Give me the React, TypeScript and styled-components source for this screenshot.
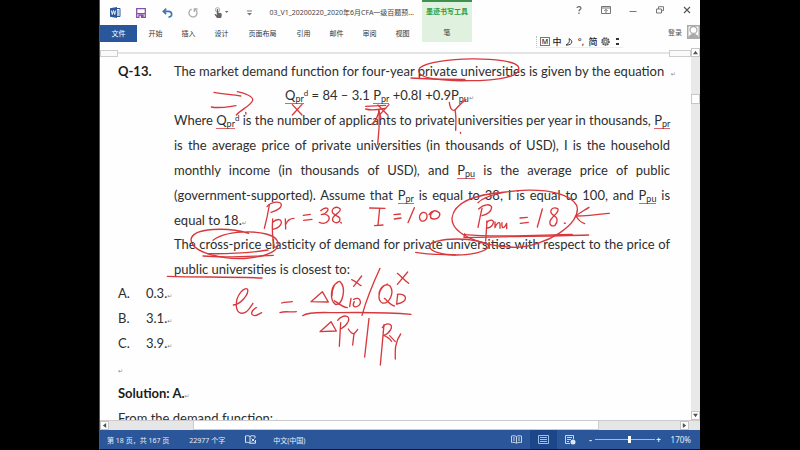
import React from 'react';
import styled, { createGlobalStyle } from 'styled-components';

const GlobalStyle = createGlobalStyle`
  * { box-sizing: border-box; }
  body { margin: 0; background: #000; }
  button { border: 0; padding: 0; margin: 0; background: none; font: inherit; color: inherit; }
`;

const ui = `"Noto Sans", "Noto Sans CJK SC", sans-serif`;

const Screen = styled.div`
  display: grid;
  grid-template-columns: 99px minmax(0, 1fr) 100px;
  height: 100vh;
  background: #000;
`;

const AppWindow = styled.div`
  grid-column: 2;
  position: relative;
  display: flex;
  flex-direction: column;
  min-width: 0;
  min-height: 0;
  overflow: hidden;
  background: #fefefe;
  border-left: 1px solid #555;
  border-bottom: 1px solid #0b1c38;
  font-family: ${ui};
  color: #555;
`;

const Header = styled.header`
  display: flex;
  flex: 0 0 48px;
`;

const HeaderMain = styled.div`
  flex: 0 0 322px;
  min-width: 0;
`;

const QuickBar = styled.div`
  display: flex;
  align-items: center;
  height: 25px;
  padding-left: 2px;
`;

const QuickButton = styled.button<{ $wide?: boolean }>`
  display: flex;
  align-items: center;
  justify-content: center;
  width: ${(p) => (p.$wide ? 30 : 26)}px;
  height: 20px;
  svg { display: block; }
`;

const FileTitle = styled.div`
  flex: 1;
  padding-right: 8px;
  font-size: 7px;
  line-height: 12px;
  white-space: nowrap;
  text-align: right;
  color: #444;
`;

const Tabs = styled.nav`
  display: flex;
  height: 17px;
  font-size: 7px;
  line-height: 17px;
`;

const FileTab = styled.button`
  width: 37px;
  margin-right: 2px;
  background: #2a569b;
  color: #fff;
`;

const Tab = styled.button<{ $wide?: boolean }>`
  width: ${(p) => (p.$wide ? 49 : 33)}px;
  color: #333;
  white-space: nowrap;
`;

const ContextTab = styled.div`
  flex: 0 0 50px;
  height: 42px;
  border-top: 2px solid #3f9150;
  background: #e0f2df;
  text-align: center;
  white-space: nowrap;
  font-size: 7px;
`;

const ContextTitle = styled.div`
  height: 23px;
  line-height: 20px;
  font-weight: 700;
  color: #2f9e3c;
`;

const ContextButton = styled.button`
  line-height: 16px;
  color: #333;
`;

const HeaderSide = styled.div`
  flex: 1;
  min-width: 0;
`;

const Controls = styled.div`
  display: flex;
  justify-content: flex-end;
  height: 22px;
`;

const Control = styled.button`
  display: flex;
  align-items: center;
  justify-content: center;
  width: 27px;
  height: 20px;
`;

const SideRow = styled.div`
  display: flex;
  justify-content: space-between;
  height: 26px;
  padding-left: 64px;
`;

const InputMethod = styled.div`
  display: flex;
  align-self: flex-end;
  align-items: center;
  height: 12px;
  padding-left: 3px;
  border-left: 1px dotted #bbb;
  border-bottom: 1px solid #eee;
  font-size: 9px;
  line-height: 11px;
  font-weight: 500;
  color: #222;
`;

const Mode = styled.button<{ $boxed?: boolean }>`
  display: flex;
  align-items: center;
  justify-content: center;
  width: ${(p) => (p.$boxed ? 10 : 12)}px;
  height: ${(p) => (p.$boxed ? 9 : 11)}px;
  margin-right: ${(p) => (p.$boxed ? 1 : 0)}px;
  border: ${(p) => (p.$boxed ? '1px solid #777' : '0')};
  font-size: ${(p) => (p.$boxed ? 7 : 9)}px;
`;

const Account = styled.button`
  display: flex;
  align-items: center;
  gap: 5px;
  height: 18px;
  padding-top: 2px;
  font-size: 7px;
  color: #555;
  white-space: nowrap;
`;

const Body = styled.div`
  display: flex;
  flex: 1;
  min-height: 0;
`;

const PageColumn = styled.div`
  display: flex;
  flex-direction: column;
  flex: 1;
  min-width: 0;
`;

const Ruler = styled.div`
  display: flex;
  align-items: center;
  justify-content: space-between;
  flex: 0 0 10px;
  background: linear-gradient(#fefefe 4px, #e4e4e4 4px, #e4e4e4 6px, #fefefe 6px);
`;

const RulerBox = styled.div<{ $right?: boolean }>`
  width: ${(p) => (p.$right ? 22 : 18)}px;
  height: 7px;
  border: 1px solid #ccc;
  background: #fafafa;
`;

const Page = styled.main`
  flex: 1;
  min-height: 0;
  overflow: hidden;
  padding: 1px 21px 0 18px;
  font-family: Lato, "Noto Sans", sans-serif;
  font-size: 13px;
  line-height: 25px;
  color: #2e2e2e;
`;

const Question = styled.section`
  display: grid;
  grid-template-columns: 56px minmax(0, 1fr);
`;

const Label = styled.strong`
  color: #1c1c1c;
`;

const Line = styled.span<{ $loose?: boolean }>`
  display: block;
  height: ${(p) => (p.$loose ? 24 : 25)}px;
  white-space: nowrap;
  text-align: left;
  text-align-last: ${(p) => (p.$loose ? 'left' : 'justify')};
`;

const Formula = styled.div`
  height: 25px;
  padding-left: 111px;
  white-space: nowrap;
`;

const Small = styled.sub`
  font-size: 9px;
  line-height: 0;
  vertical-align: -2px;
`;

const Raised = styled.sup`
  font-size: 8px;
  line-height: 0;
  vertical-align: 4px;
`;

const Flagged = styled.span`
  box-shadow: 0 1px 0 #d9656b;
`;

const Mark = styled.span`
  font-family: "DejaVu Sans", sans-serif;
  font-size: 6px;
  line-height: 0;
  color: #888;
`;

const Answers = styled.ol`
  margin: 0;
  padding: 0;
  list-style: none;
`;

const Answer = styled.li`
  display: grid;
  grid-template-columns: 28px 1fr;
`;

const Paragraph = styled.div`
  height: 25px;
  white-space: nowrap;
`;

const VScroll = styled.div`
  display: flex;
  flex-direction: column;
  flex: 0 0 9px;
  background: #e9e9e9;
`;

const ScrollButton = styled.button`
  display: flex;
  align-items: center;
  justify-content: center;
  flex: 0 0 9px;
  height: 9px;
  border: 1px solid #c6c6c6;
  background: #fff;
`;

const VThumb = styled.div`
  height: 10px;
  margin: 37px 0 auto;
  border: 1px solid #c6c6c6;
  background: #fff;
`;

const HScroll = styled.div`
  display: flex;
  flex: 0 0 10px;
  padding-right: 11px;
  background: #e6e6e6;
  border-top: 1px solid #ccc;
`;

const HThumb = styled.div`
  flex: 1;
  margin: 0 81px 0 84px;
  border: 1px solid #ccc;
  border-top: 0;
  background: #fff;
`;

const Status = styled.footer`
  display: flex;
  align-items: center;
  flex: 0 0 19px;
  padding: 0 9px 0 7px;
  background: #2b579a;
  color: #e6edf7;
  font-size: 7px;
  white-space: nowrap;
`;

const StatusText = styled.span<{ $icon?: boolean }>`
  margin-right: ${(p) => (p.$icon ? 17 : 20)}px;
  svg { display: block; }
`;

const View = styled.button<{ $active?: boolean }>`
  display: flex;
  align-items: center;
  justify-content: center;
  width: 27px;
  height: 19px;
  background: ${(p) => (p.$active ? '#1c468a' : 'transparent')};
`;

const Views = styled.div`
  display: flex;
  margin-left: auto;
`;

const Zoom = styled.div`
  display: flex;
  align-items: center;
  margin-left: 3px;
  font-size: 8px;
`;

const ZoomStep = styled.button`
  width: 8px;
  font-weight: 700;
  line-height: 12px;
`;

const ZoomRange = styled.input`
  appearance: none;
  width: 60px;
  height: 9px;
  margin: 0;
  background: linear-gradient(transparent 4px, #a9bbd8 4px, #a9bbd8 5px, transparent 5px);
  &::-webkit-slider-thumb {
    appearance: none;
    width: 3px;
    height: 7px;
    background: #fff;
  }
`;

const ZoomValue = styled.span`
  margin-left: 8px;
`;

const InkLayer = styled.svg`
  position: absolute;
  top: 0;
  left: -1px;
  pointer-events: none;
`;

const Arrow = ({ d }: { d: string }) => (
  <svg width="5" height="5" viewBox="0 0 6 6"><path d={d} fill="#555" /></svg>
);

/* Handwritten annotations, grouped by the area of the page they sit on. */
const ink = [
  {
    at: [95, 55],
    strokes: [
      'M357 112C385 118 412 118 437 123',
      'M349 156C375 161 400 155 423 152',
      'M427 110C452 114 476 126 473 136C468 152 440 162 424 180',
      'M592 149L621 180', 'M621 148L592 180',
      'M812 154L872 151', 'M812 162C830 168 855 163 872 160',
      'M849 150L879 181', 'M882 149L855 178',
      'M848 268C851 230 856 200 851 166', 'M832 208C842 195 851 180 852 167L858 190',
      'M452 172L453 177',
    ],
  },
  {
    at: [390, 55],
    strokes: [
      'M385 35C365 2 130 5 90 38C65 75 180 78 235 77C320 77 405 65 383 32',
      'M63 69C110 73 170 73 225 73',
      'M178 142C181 165 188 168 195 165C204 155 218 140 228 134',
      'M195 165C199 180 198 205 197 226', 'M211 232L212 235',
    ],
  },
  {
    at: [95, 175],
    strokes: [
      'M523 90C519 115 514 138 508 160', 'M516 95C530 78 560 77 559 91C557 103 540 108 528 112',
      'M533 132C531 160 532 190 538 217', 'M533 142C552 125 564 137 557 149C551 160 540 162 533 163',
      'M571 132L572 162', 'M572 148C578 134 588 130 597 130',
      'M625 121L646 118', 'M626 136L651 133',
      'M677 107C692 94 704 99 697 108C692 117 685 118 679 119C694 113 708 125 700 137C694 146 682 146 673 142',
      'M735 101C722 90 705 104 714 115C724 124 741 126 733 139C724 148 707 140 715 126C721 117 741 110 735 101',
      'M737 142L739 144',
      'M824 99L870 100', 'M854 101L849 150', 'M839 152L864 150',
      'M461 175C400 156 292 157 288 194C291 235 391 256 462 249C526 243 560 222 546 196C526 162 398 163 354 196',
      'M338 236C402 237 467 233 519 225', 'M324 243C390 249 461 244 535 241',
      'M217 304C310 307 405 305 501 309',
    ],
  },
  {
    at: [390, 175],
    strokes: [
      'M12 119L31 117', 'M13 132L33 129', 'M73 98L54 143',
      'M99 112C83 119 87 141 101 138C114 134 116 111 99 112',
      'M117 119C125 105 137 104 148 113C153 123 143 133 131 132C119 132 117 119 131 108',
      'M264 83C309 38 526 25 560 91C579 149 460 215 380 217C280 216 184 180 186 129C193 79 265 57 348 51',
      'M276 100C271 121 268 138 264 157', 'M266 102C280 87 304 85 305 98C303 111 289 119 276 122',
      'M291 138L287 198', 'M290 142C304 130 315 136 308 149C303 158 296 159 290 159',
      'M315 141V158C319 145 329 138 330 147V160', 'M336 143C334 164 342 161 350 145V161',
      'M390 129L412 127', 'M391 145L415 142', 'M457 102L442 156',
      'M503 101C487 93 475 109 488 119C505 129 504 139 495 151C481 158 473 142 487 128C494 119 510 109 503 101',
      'M523 144L526 145',
      'M658 115C625 119 593 123 559 123', 'M597 97C582 107 567 114 558 123C566 137 574 143 584 146',
      'M224 176L222 188C315 185 465 184 596 180', 'M224 179C323 188 442 180 547 178',
      'M118 215C115 201 157 192 201 192C248 192 289 202 297 213C290 230 246 240 200 240C156 240 122 230 118 215',
      'M77 232C115 239 158 238 196 240',
    ],
  },
  {
    at: [95, 280],
    strokes: [
      'M415 75C437 74 462 42 458 28C449 18 422 46 424 77C425 101 445 109 463 86C470 77 474 69 474 70',
      'M484 83C468 91 465 106 479 107C486 107 493 101 500 98',
      'M560 69C571 64 578 68 592 65', 'M555 98C571 92 587 98 604 95',
      'M623 107C641 94 688 98 724 98C797 97 873 96 948 103',
      'M648 65L682 35L700 66Z',
      'M727 8C706 18 703 61 722 74C744 73 755 23 734 4C719 6 710 28 711 48', 'M718 62C733 73 744 82 757 83',
      'M770 -1C781 3 789 11 798 17', 'M800 -12L776 19',
      'M768 55L764 80', 'M776 58C796 47 802 69 789 78C778 84 770 79 778 65',
      'M855 -35C832 15 814 60 801 106',
      'M877 12C850 23 845 60 862 69C884 72 898 38 886 19C873 6 854 22 852 43', 'M868 55C877 62 885 74 898 78',
      'M908 44L905 72', 'M907 43C935 39 944 63 906 72',
      'M907 -20C919 -10 929 1 941 10', 'M938 -24L907 13',
      'M675 155L708 125L724 153Z',
      'M737 128L733 199', 'M728 121C744 102 769 104 759 126C754 136 744 143 737 147',
      'M760 147C765 156 773 163 778 160C782 157 785 152 788 148', 'M777 161L773 195',
      'M822 115L809 231',
      'M867 134L856 255', 'M862 143C873 126 897 129 887 149C881 160 873 164 866 167C877 169 884 177 890 184',
      'M884 167L901 185', 'M917 162C900 186 900 210 901 237',
    ],
  },
];

const Ink = () => (
  <InkLayer width="600" height="430" viewBox="99 0 600 430" aria-hidden="true">
    {ink.map((group, i) => (
      <g
        key={i}
        transform={`translate(${group.at[0]} ${group.at[1]}) scale(0.33333)`}
        fill="none"
        stroke="#d8383d"
        strokeWidth="4"
        strokeLinecap="round"
        strokeLinejoin="round"
      >
        {group.strokes.map((d, j) => <path key={j} d={d} />)}
      </g>
    ))}
  </InkLayer>
);

const tabs = ['开始', '插入', '设计', '页面布局', '引用', '邮件', '审阅', '视图'];
const answers = [['A.', '0.3.'], ['B.', '3.1.'], ['C.', '3.9.']];

export default function App() {
  return (
    <Screen>
      <GlobalStyle />
      <AppWindow>
        <Header>
          <HeaderMain>
            <QuickBar>
              <QuickButton aria-label="Word">
                <svg width="11" height="11" viewBox="0 0 11 11"><path d="M5 1.5h5v8H5" fill="#fff" stroke="#2b579a" /><path d="M7 4h2M7 6h2M7 8h2" stroke="#2b579a" strokeWidth=".7" /><path d="M0 1.2L7 0v11L0 9.8z" fill="#2b579a" /><path d="M1.4 3.5l.9 4 1.2-4 1.2 4 .9-4" fill="none" stroke="#fff" strokeWidth=".9" /></svg>
              </QuickButton>
              <QuickButton aria-label="保存">
                <svg width="10" height="10" viewBox="0 0 10 10"><path d="M.7.7h8.6v8.6H.7z" fill="#fff" stroke="#8a50a5" strokeWidth="1.3" /><path d="M1 5h8v1.2H1zM2.3 6.5h5.4V10H2.3z" fill="#8a50a5" /><path d="M3.5 7.8h1.3V10H3.5z" fill="#fff" /></svg>
              </QuickButton>
              <QuickButton aria-label="撤消">
                <svg width="11" height="10" viewBox="0 0 11 10"><path d="M4.2.7L1.3 3.4l2.9 2.7M1.5 3.4h4.8c4.4 0 4.6 5.4.2 5.7" fill="none" stroke="#3b76b7" strokeWidth="1.6" /></svg>
              </QuickButton>
              <QuickButton aria-label="重复">
                <svg width="10" height="10" viewBox="0 0 10 10"><path d="M3.6 1.2A4 4 0 1 0 7.5 1.8M9.5 1H6.3v3" fill="none" stroke="#aaa" strokeWidth="1.3" /></svg>
              </QuickButton>
              <QuickButton $wide aria-label="触摸/鼠标模式">
                <svg width="15" height="11" viewBox="0 0 15 11"><circle cx="3.5" cy="2.8" r="2.2" fill="none" stroke="#9fb3c8" /><path d="M2.8 2.5c0-1 1.4-1 1.4 0v3l3 .7c.9.3.7 3.3-.2 4.8H3L.5 7.6c-.2-.7.8-.8 1.4-.3l.9.6z" fill="#666" /><path d="M11 4h3.4l-1.7 2z" fill="#666" /></svg>
              </QuickButton>
              <QuickButton aria-label="自定义快速访问工具栏">
                <svg width="5" height="6" viewBox="0 0 5 6"><path d="M0 1h5" stroke="#777" /><path d="M0 3h5L2.5 5.5z" fill="#777" /></svg>
              </QuickButton>
              <FileTitle>03_V1_20200220_2020年6月CFA一级百题预...</FileTitle>
            </QuickBar>
            <Tabs>
              <FileTab>文件</FileTab>
              {tabs.map((t) => <Tab key={t} $wide={t.length > 2}>{t}</Tab>)}
            </Tabs>
          </HeaderMain>
          <ContextTab>
            <ContextTitle>墨迹书写工具</ContextTitle>
            <ContextButton>笔</ContextButton>
          </ContextTab>
          <HeaderSide>
            <Controls>
              <Control aria-label="帮助"><svg width="6" height="8" viewBox="0 0 6 8"><path d="M1 2C1 .2 5 .2 5 2.2 5 3.6 3 3.6 3 5.3M3 6.5V8" fill="none" stroke="#666" strokeWidth="1.2" /></svg></Control>
              <Control aria-label="功能区显示选项"><svg width="10" height="8" viewBox="0 0 10 8"><path d="M.5.5h9v7h-9zM.5 2h9M5 7V3.5M3.3 5L5 3.3 6.7 5" fill="none" stroke="#777" /></svg></Control>
              <Control aria-label="最小化"><svg width="8" height="8" viewBox="0 0 8 8"><path d="M.5 5.5h7" stroke="#777" /></svg></Control>
              <Control aria-label="还原"><svg width="8" height="8" viewBox="0 0 8 8"><path d="M.5 3h5v4h-5zM2.5 3V.7h5v4H5.5" fill="none" stroke="#777" /></svg></Control>
              <Control aria-label="关闭"><svg width="8" height="8" viewBox="0 0 8 8"><path d="M1 1l6 6M7 1L1 7" stroke="#555" strokeWidth="1.1" /></svg></Control>
            </Controls>
            <SideRow>
              <InputMethod>
                <Mode $boxed>M</Mode>
                <Mode>中</Mode>
                <Mode aria-label="半角"><svg width="8" height="8" viewBox="0 0 8 8"><path d="M4 .7C8.5 2.5 7.5 7.5 1 7 4 5.5 5 3.5 4 .7z" fill="none" stroke="#333" /></svg></Mode>
                <Mode>°,</Mode>
                <Mode>简</Mode>
                <Mode aria-label="设置"><svg width="9" height="9" viewBox="0 0 9 9"><circle cx="4.5" cy="4.5" r="3.5" fill="#aaa" stroke="#555" strokeDasharray="1.6 .7" strokeWidth="1.5" /><circle cx="4.5" cy="4.5" r="1.3" fill="#fff" stroke="#555" strokeWidth=".7" /></svg></Mode>
                <Mode aria-label="更多"><svg width="3" height="7" viewBox="0 0 3 7"><path d="M0 0h3v2H0zM0 5h3v2H0z" fill="#333" /></svg></Mode>
              </InputMethod>
              <Account>
                登录
                <svg width="13" height="14" viewBox="0 0 13 14"><path d="M0 0h13v14H0z" fill="#aaa" /><path d="M1.500 13V1.500h10V13z" fill="#fff" /><circle cx="6.5" cy="5" r="3.500" fill="#fff" stroke="#aaa" strokeWidth="1.3" /><path d="M1 14c0-3 2-5 5.5-5S12 11 12 14z" fill="#aaa" /></svg>
              </Account>
            </SideRow>
          </HeaderSide>
        </Header>

        <Body>
          <PageColumn>
            <Ruler><RulerBox /><RulerBox $right /></Ruler>
            <Page>
              <Question>
                <Label>Q-13.</Label>
                <div>
                  <Line $loose>The market demand function for four-year private universities is given by the equation &nbsp;<Mark>↵</Mark></Line>
                  <Formula>
                    <Flagged>Q<Small>pr</Small></Flagged><Raised>d</Raised> = 84 – 3.1 <Flagged>P<Small>pr</Small></Flagged> +0.8I +0.9P<Small>pu</Small><Mark>↵</Mark>
                  </Formula>
                  <Line>Where <Flagged>Q<Small>pr</Small></Flagged><Raised>d</Raised> is the number of applicants to private universities per year in thousands, <Flagged>P<Small>pr</Small></Flagged></Line>
                  <Line>is the average price of private universities (in thousands of USD), I is the household</Line>
                  <Line>monthly income (in thousands of USD), and <Flagged>P<Small>pu</Small></Flagged> is the average price of public</Line>
                  <Line>(government-supported). Assume that <Flagged>P<Small>pr</Small></Flagged> is equal to 38, I is equal to 100, and <Flagged>P<Small>pu</Small></Flagged> is</Line>
                  <Line $loose>equal to 18.<Mark>↵</Mark></Line>
                  <Line>The cross-price elasticity of demand for private universities with respect to the price of</Line>
                  <Line $loose>public universities is closest to:</Line>
                </div>
              </Question>
              <Answers>
                {answers.map(([k, v]) => (
                  <Answer key={k}><span>{k}</span><span>{v}<Mark>↵</Mark></span></Answer>
                ))}
              </Answers>
              <Paragraph><Mark>↵</Mark></Paragraph>
              <Paragraph><Label>Solution: A.</Label><Mark>↵</Mark></Paragraph>
              <Paragraph>From the demand function:<Mark>↵</Mark></Paragraph>
            </Page>
          </PageColumn>
          <VScroll>
            <ScrollButton aria-label="向上滚动"><Arrow d="M0 5h6L3 1z" /></ScrollButton>
            <VThumb />
            <ScrollButton aria-label="向下滚动"><Arrow d="M0 1h6L3 5z" /></ScrollButton>
          </VScroll>
        </Body>

        <HScroll>
          <ScrollButton aria-label="向左滚动"><Arrow d="M5 0v6L1 3z" /></ScrollButton>
          <HThumb />
          <ScrollButton aria-label="向右滚动"><Arrow d="M1 0v6l4-3z" /></ScrollButton>
        </HScroll>

        <Status>
          <StatusText>第 18 页，共 167 页</StatusText>
          <StatusText>22977 个字</StatusText>
          <StatusText $icon>
            <svg width="11" height="9" viewBox="0 0 11 9"><path d="M5 1.5C3.5.5 2 .7.5 1v6.5c1.500-.3 3-.3 4.500.7zM5 1.5C6.5.5 8 .7 10 1v2M5 8.200h5.500V5" fill="none" stroke="#dce6f4" /><path d="M6.5 3.5l3 3M9.5 3.5l-3 3" stroke="#dce6f4" /></svg>
          </StatusText>
          <StatusText>中文(中国)</StatusText>
          <Views>
            <View aria-label="阅读视图"><svg width="11" height="9" viewBox="0 0 11 9"><path d="M5.5 1.5C4 .5 2 .7.5 1v6.5c1.5-.3 3.5-.3 5 .7 1.5-1 3.5-1 5-.7V1C9 .7 7 .5 5.5 1.5zv6.5M2 3h2M2 5h2M7 3h2M7 5h2" fill="none" stroke="#c7d5ea" /></svg></View>
            <View $active aria-label="页面视图"><svg width="11" height="9" viewBox="0 0 11 9"><path d="M.5.5h10v8H.5zM2 2.5h7M2 4.5h7M2 6.5h7" fill="none" stroke="#9fc0e0" /></svg></View>
            <View aria-label="Web 版式视图"><svg width="11" height="10" viewBox="0 0 11 10"><path d="M5 8.5H.5v-8h8V4M2 2.5h5M2 4.5h4M2 6.5h2" fill="none" stroke="#c7d5ea" /><circle cx="8" cy="7" r="2.5" fill="#dce6f4" /></svg></View>
          </Views>
          <Zoom>
            <ZoomStep aria-label="缩小">-</ZoomStep>
            <ZoomRange type="range" min="10" max="500" defaultValue="300" aria-label="显示比例" />
            <ZoomStep aria-label="放大">+</ZoomStep>
            <ZoomValue>170%</ZoomValue>
          </Zoom>
        </Status>
        <Ink />
      </AppWindow>
    </Screen>
  );
}
